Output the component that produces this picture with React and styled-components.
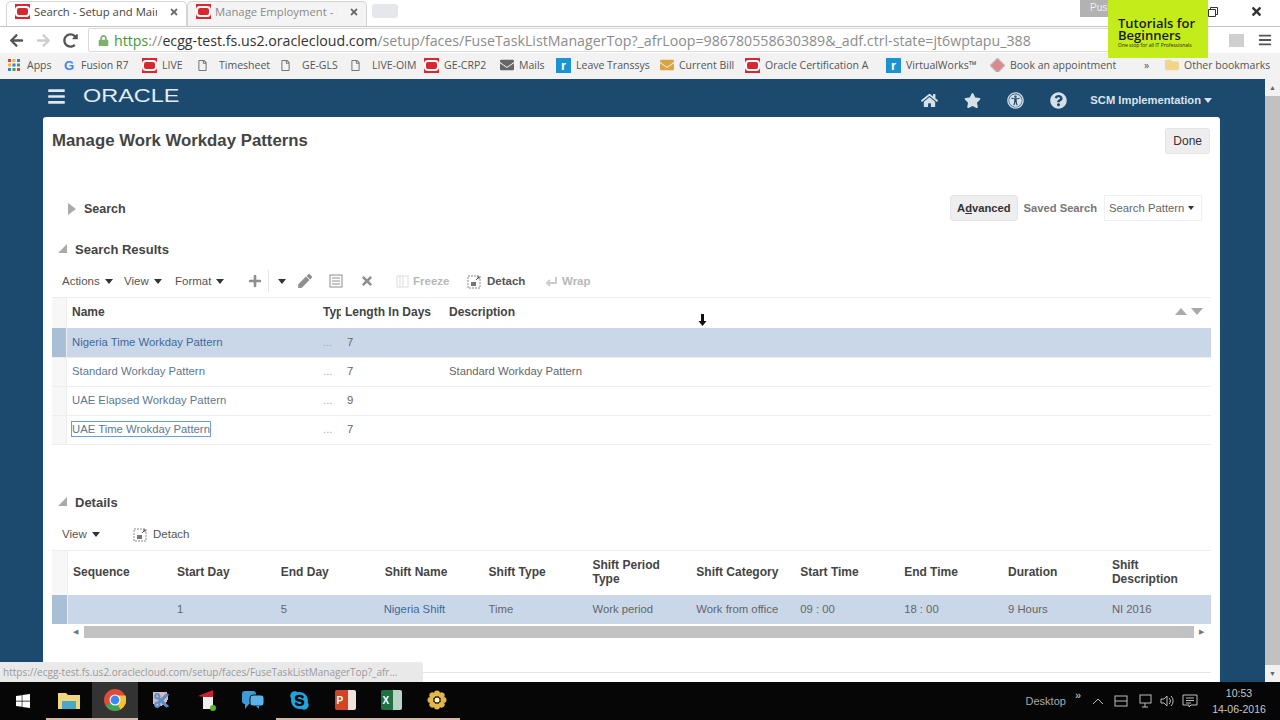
import React from "react";
import styled, { createGlobalStyle } from "styled-components";
import { FaHome, FaStar, FaUniversalAccess, FaQuestionCircle, FaPlus, FaPen, FaTimes, FaWindows, FaSkype, FaRegFile, FaLock, FaArrowLeft, FaArrowRight, FaRedoAlt, FaBars, FaFolder, FaEnvelope, FaCut } from "react-icons/fa";

const GlobalStyle = createGlobalStyle`
  html, body { margin: 0; padding: 0; height: 100%; overflow: hidden; background: #fff; }
  body { font-family: "Liberation Sans", Arial, sans-serif; color: #333; }
  * { box-sizing: border-box; }
`;

const Frame = styled.div`
  position: relative;
  width: 1280px;
  height: 720px;
  display: flex;
  flex-direction: column;
  overflow: hidden;
`;

/* browser chrome */
const TabStrip = styled.div`
  height: 27px;
  display: flex;
  align-items: flex-end;
  padding-left: 6px;
  background: #fff;
  border-bottom: 1px solid #c4c4c4;
  flex: none;
`;
const Tab = styled.div`
  width: ${(p) => p.$w}px;
  height: 25px;
  display: flex;
  align-items: center;
  gap: 4px;
  padding: 0 7px 5px 8px;
  font-family: "Open Sans", sans-serif;
  font-size: 11.3px;
  white-space: nowrap;
  color: ${(p) => (p.$active ? "#444" : "#8a8a8a")};
  background: ${(p) => (p.$active ? "#fff" : "#f4f4f4")};
  border: 1px solid #d4d4d4;
  border-bottom: none;
  border-radius: 5px 5px 0 0;
`;
const TabTitle = styled.span`
  flex: 1;
  overflow: hidden;
`;
const TabClose = styled(FaTimes)`
  font-size: 10px;
  color: #666;
  margin-left: 8px;
  flex: none;
`;
const NewTab = styled.div`
  width: 26px;
  height: 14px;
  margin: 0 0 8px 5px;
  background: #e6e7ea;
  border-radius: 3px;
`;
const WindowControls = styled.div`
  margin-left: auto;
  height: 26px;
  display: flex;
  align-self: flex-start;
`;
const PushButton = styled.div`
  width: 40px;
  height: 17px;
  padding: 2px 0 0 10px;
  background: #b2b2b2;
  color: #eee;
  font-size: 10px;
  margin-right: 88px;
`;
const RestoreIcon = styled.svg`
  width: 10px;
  height: 10px;
  margin: 7px 32px 0 0;
`;
const CloseIcon = styled(FaTimes)`
  font-size: 13px;
  color: #333;
  margin: 5px 17px 0 0;
`;

const AddressRow = styled.div`
  height: 26px;
  flex: none;
  display: flex;
  align-items: center;
  background: #fff;
  padding-left: 9px;
`;
const NavIcon = styled.span`
  width: 27px;
  display: flex;
  font-size: 15px;
  color: ${(p) => (p.$off ? "#cdcdcd" : "#555")};
`;
const Omnibox = styled.div`
  width: 1117px;
  height: 24px;
  margin-left: -2px;
  display: flex;
  align-items: center;
  gap: 5px;
  padding-left: 9px;
  border: 1px solid #dadada;
  border-radius: 2px;
  font-family: "Open Sans", sans-serif;
  font-size: 14.2px;
  white-space: nowrap;
  overflow: hidden;
`;
const Green = styled.span`
  color: #3f9a3c;
`;
const UrlHost = styled.span`
  color: #333;
`;
const UrlRest = styled.span`
  color: #8c8c8c;
`;
const LockIcon = styled(FaLock)`
  font-size: 11px;
  color: #7fb069;
  flex: none;
`;
const ToolIcons = styled.div`
  display: flex;
  align-items: center;
  gap: 14px;
  margin-left: 24px;
`;
const Cast = styled.div`
  width: 15px;
  height: 13px;
  background: #cfcfcf;
`;
const Menu3 = styled(FaBars)`
  font-size: 14px;
  color: #555;
`;

const Bookmarks = styled.div`
  height: 26px;
  flex: none;
  display: flex;
  align-items: center;
  padding: 0 0 2px 7px;
  background: #f2f2f2;
  font-family: "Open Sans", sans-serif;
  font-size: 10.5px;
  color: #555;
  white-space: nowrap;
`;
const Bookmark = styled.div`
  display: flex;
  align-items: center;
  gap: 5px;
  width: ${(p) => p.$w}px;
  padding-left: ${(p) => p.$pl ?? 0}px;
  flex: none;
  overflow: hidden;
`;
const BookmarkText = styled.span`
  width: ${(p) => p.$w}px;
  overflow: hidden;
`;
const PageIcon = styled(FaRegFile)`
  font-size: 11px;
  color: #777;
  margin-right: 6px;
  flex: none;
`;
const FolderIcon = styled(FaFolder)`
  font-size: 14px;
  color: #f1d58a;
  flex: none;
`;
const MailIcon = styled(FaEnvelope)`
  font-size: 14px;
  color: ${(p) => p.$c};
  flex: none;
`;
const OracleMark = styled.span`
  width: 15px;
  height: 15px;
  flex: none;
  display: flex;
  align-items: center;
  justify-content: center;
  background: #d8282f;
  &::after {
    content: "";
    width: 11px;
    height: 7px;
    border: 2px solid #fff;
    border-radius: 4px;
  }
`;
const SquareMark = styled.span`
  width: 15px;
  height: 15px;
  flex: none;
  background: ${(p) => p.$c};
  color: #fff;
  font-family: "Liberation Sans", sans-serif;
  font-weight: bold;
  font-size: 13px;
  line-height: 15px;
  text-align: center;
`;
const GoogleG = styled.span`
  width: 12px;
  flex: none;
  font-family: "Liberation Sans", sans-serif;
  font-weight: bold;
  font-size: 13px;
  color: #4285f4;
`;
const Diamond = styled.span`
  width: 11px;
  height: 11px;
  margin: 0 2px;
  flex: none;
  transform: rotate(45deg);
  background: #d98a90;
  border: 1px solid #b9b9b9;
`;
const AppsDots = styled.svg`
  width: 14px;
  height: 14px;
  margin-right: 1px;
  flex: none;
`;

/* application */
const AppArea = styled.div`
  flex: 1;
  min-height: 0;
  display: flex;
  background: #1b4a6e;
`;
const Main = styled.div`
  flex: 1;
  min-width: 0;
  display: flex;
  flex-direction: column;
  padding-left: 43px;
`;
const Scrollbar = styled.div`
  width: 15px;
  flex: none;
  background: #f1f1f1;
  display: flex;
  flex-direction: column;
  align-items: center;
  justify-content: space-between;
  padding: 5px 0;
  color: #666;
  font-size: 7px;
`;
const ScrollThumb = styled.div`
  width: 100%;
  flex: 1;
  margin: 5px 0;
  background: #c1c1c1;
`;
const AppHeader = styled.header`
  height: 38px;
  flex: none;
  display: flex;
  align-items: center;
  color: #fff;
  padding: 4px 53px 0 0;
`;
const Burger = styled(FaBars)`
  font-size: 19px;
  color: #dfe8ef;
  margin: -8px 0 0 4px;
`;
const Logo = styled.span`
  margin: -8px 0 0 17px;
  font-size: 17.5px;
  color: #e4ebf1;
  transform: scaleX(1.34);
  transform-origin: left center;
`;
const HeaderIcons = styled.div`
  margin-left: auto;
  display: flex;
  align-items: center;
  gap: 26px;
  font-size: 17px;
  color: #d4dfe8;
`;
const UserMenu = styled.span`
  margin-left: -3px;
  font-size: 11.2px;
  font-weight: bold;
  color: #d9e3ec;
`;
const Caret = styled.i`
  display: inline-block;
  width: 0;
  height: 0;
  margin-left: ${(p) => p.$ml ?? 5}px;
  vertical-align: 1px;
  border-left: ${(p) => p.$s ?? 4}px solid transparent;
  border-right: ${(p) => p.$s ?? 4}px solid transparent;
  border-top: ${(p) => (p.$s ?? 4) + 1}px solid ${(p) => p.$c ?? "#333"};
`;

const Card = styled.main`
  width: 1177px;
  flex: 1;
  min-height: 0;
  background: #fff;
  border-radius: 3px 3px 0 0;
  padding: 0 9px;
  display: flex;
  flex-direction: column;
`;
const TitleRow = styled.div`
  height: 47px;
  flex: none;
  padding-right: 1px;
  display: flex;
  align-items: center;
  justify-content: space-between;
`;
const Title = styled.h1`
  margin: 0;
  font-size: 16.8px;
  font-weight: bold;
  color: #444;
`;
const Button = styled.div`
  height: 26px;
  padding: 0 ${(p) => p.$px ?? 7}px;
  display: flex;
  align-items: center;
  font-size: ${(p) => p.$fs ?? 12}px;
  font-weight: ${(p) => (p.$bold ? "bold" : "normal")};
  color: #333;
  background: #eeeeee;
  border: 1px solid #e4e4e4;
  border-radius: 3px;
`;
const SearchRow = styled.div`
  height: 27px;
  margin-top: 31px;
  flex: none;
  display: flex;
  align-items: center;
  padding-left: 16px;
`;
const ArrowRight = styled.i`
  width: 0;
  height: 0;
  margin-right: 8px;
  border-top: 6px solid transparent;
  border-bottom: 6px solid transparent;
  border-left: 8px solid #aaa;
`;
const SearchLabel = styled.span`
  font-size: 12.5px;
  font-weight: bold;
  color: #444;
`;
const SearchActions = styled.div`
  margin-left: auto;
  display: flex;
  align-items: center;
  padding: 0 9px 2px 0;
`;
const SavedSearch = styled.span`
  margin: 0 7px 0 6px;
  font-size: 11.2px;
  font-weight: bold;
  color: #777;
`;
const PatternSelect = styled.div`
  width: 98px;
  height: 26px;
  display: flex;
  align-items: center;
  padding-left: 4px;
  font-size: 11.3px;
  color: #666;
  border: 1px solid #f0f0f0;
`;
const SectionHead = styled.div`
  height: 24px;
  margin-top: ${(p) => p.$mt}px;
  flex: none;
  display: flex;
  align-items: center;
  gap: 8px;
  font-size: 13px;
  font-weight: bold;
  color: #444;
`;
const Collapse = styled.i`
  width: 0;
  height: 0;
  margin: -2px 0 0 6px;
  border-bottom: 9px solid #aaa;
  border-left: 9px solid transparent;
`;
const Toolbar = styled.div`
  height: 30px;
  margin-top: 5px;
  flex: none;
  display: flex;
  align-items: center;
  padding-left: 10px;
  font-size: 11.5px;
  color: #555;
`;
const ToolMenu = styled.span`
  width: ${(p) => p.$w}px;
  flex: none;
`;
const ToolIcon = styled.span`
  width: ${(p) => p.$w ?? 31}px;
  flex: none;
  display: flex;
  justify-content: center;
  font-size: 14px;
  color: ${(p) => p.$c ?? "#8e8e8e"};
`;
const ToolDivider = styled.span`
  width: 1px;
  height: 22px;
  margin-left: 3px;
  flex: none;
  background: #e6e6e6;
`;
const ToolText = styled.span`
  display: flex;
  align-items: center;
  gap: ${(p) => p.$gap ?? 5}px;
  width: ${(p) => p.$w}px;
  margin-left: ${(p) => p.$ml ?? 0}px;
  flex: none;
  font-size: 11.5px;
  font-weight: ${(p) => (p.$plain ? "normal" : "bold")};
  color: ${(p) => (p.$off ? "#b8b8b8" : "#555")};
`;
const DetachIcon = styled.svg`
  width: 15px;
  height: 15px;
  flex: none;
`;

const Table = styled.div`
  position: relative;
  margin-top: 1px;
  flex: none;
  border-top: 1px solid #eee;
  border-bottom: ${(p) => (p.$closed ? "1px solid #eee" : "none")};
`;
const Row = styled.div`
  display: grid;
  grid-template-columns: ${(p) => p.$cols};
  height: ${(p) => p.$h ?? 29}px;
  align-items: center;
  font-size: 11.3px;
  color: #666;
  border-top: ${(p) => (p.$line ? "1px solid #eee" : "none")};
  background: ${(p) => (p.$selected ? "#c9d7e8" : "#fff")};
  white-space: nowrap;
`;
const Gutter = styled.div`
  height: 100%;
  background: ${(p) => (p.$selected ? "#a9bfd6" : "#f7f7f7")};
  border-right: 1px solid #eee;
`;
const HeadCell = styled.div`
  margin-top: -2px;
  font-size: 12px;
  font-weight: bold;
  color: #444;
  white-space: pre-line;
  line-height: 14px;
  overflow: hidden;
  padding-left: ${(p) => p.$pl ?? 5}px;
`;
const Cell = styled.div`
  margin-top: -2px;
  padding-left: ${(p) => p.$pl ?? 5}px;
`;
const LinkCell = styled.span`
  color: ${(p) => p.$c ?? "#4f6f8f"};
  padding: 1px 0;
  outline: ${(p) => (p.$focus ? "1px solid #6d9ed8" : "none")};
`;
const Dots = styled.span`
  color: #aaa;
`;
const SortArrows = styled.div`
  position: absolute;
  top: 10px;
  right: 8px;
  display: flex;
  gap: 4px;
`;
const ArrowUp = styled.i`
  width: 0;
  height: 0;
  border-left: 6px solid transparent;
  border-right: 6px solid transparent;
  border-bottom: 7px solid #aaa;
`;
const ArrowDown = styled.i`
  width: 0;
  height: 0;
  border-left: 6px solid transparent;
  border-right: 6px solid transparent;
  border-top: 7px solid #aaa;
`;
const HScroll = styled.div`
  height: 12px;
  margin: 2px 7px 0 21px;
  display: flex;
  align-items: center;
  justify-content: space-between;
  color: #777;
  font-size: 7px;
`;
const HThumb = styled.div`
  width: 1110px;
  height: 12px;
  background: #c1c1c1;
`;
const Footer = styled.div`
  margin-top: 34px;
  height: 10px;
  border-top: 1px solid #e4e4e4;
  flex: none;
`;

/* overlays */
const StatusTip = styled.div`
  position: absolute;
  left: 0;
  top: 662px;
  width: 423px;
  height: 20px;
  padding: 3px 0 0 3px;
  background: #e9e9e9;
  border-radius: 0 3px 0 0;
  font-family: "Open Sans", sans-serif;
  font-size: 10px;
  color: #999;
  white-space: nowrap;
`;
const Promo = styled.div`
  position: absolute;
  top: 0;
  left: 1108px;
  width: 100px;
  height: 58px;
  padding: 18px 0 0 10px;
  background: #c4ec1b;
  color: #1a1a1a;
  font-family: "Open Sans", sans-serif;
`;
const PromoTitle = styled.div`
  font-size: 13px;
  font-weight: 600;
  line-height: 11.5px;
`;
const PromoSub = styled.div`
  font-size: 5px;
  line-height: 9px;
  white-space: nowrap;
`;
const Pointer = styled.svg`
  position: absolute;
  left: 698px;
  top: 313px;
  width: 9px;
  height: 14px;
`;

/* taskbar */
const Taskbar = styled.footer`
  height: 38px;
  flex: none;
  display: flex;
  align-items: center;
  background: #060606;
  color: #bbb;
`;
const StartIcon = styled(FaWindows)`
  width: 46px;
  font-size: 16px;
  color: #fff;
  flex: none;
`;
const TaskItem = styled.div`
  width: 46px;
  height: 38px;
  flex: none;
  display: flex;
  align-items: center;
  justify-content: center;
  background: ${(p) => (p.$active ? "#333" : "transparent")};
  border-bottom: 2px solid ${(p) => (p.$open ? "#d3b7a7" : "transparent")};
`;
const Tile = styled.span`
  width: 21px;
  height: 20px;
  display: flex;
  align-items: center;
  padding-left: 2px;
  background: ${(p) => p.$bg};
  border-radius: 2px;
  color: #fff;
  font-size: 10px;
  font-weight: bold;
`;
const SnipIcon = styled(FaCut)`
  font-size: 17px;
  color: #5b8fc4;
  background: radial-gradient(circle at 35% 30%, #d9b8c4 55%, transparent 56%);
`;
const Tray = styled.div`
  margin-left: auto;
  display: flex;
  align-items: center;
  font-size: 11px;
  color: #a8a8a8;
`;
const TrayMore = styled.span`
  margin: -12px 2px 0 9px;
  font-size: 11px;
  font-weight: bold;
`;
const TrayIcon = styled.svg`
  width: 16px;
  height: 16px;
  margin-left: 7px;
`;
const Clock = styled.div`
  width: 60px;
  margin: 0 11px;
  text-align: center;
  font-size: 10.5px;
  line-height: 16px;
  color: #c8c8c8;
`;

const detailCols = "16px repeat(11, 103.9px)";
const resultCols = "15px 255px 19px 103px 1fr";

const results = [
  { name: "Nigeria Time Workday Pattern", days: 7, selected: true },
  { name: "Standard Workday Pattern", days: 7, desc: "Standard Workday Pattern" },
  { name: "UAE Elapsed Workday Pattern", days: 9 },
  { name: "UAE Time Wrokday Pattern", days: 7, focus: true },
];
const detailHeads = ["Sequence", "Start Day", "End Day", "Shift Name", "Shift Type", "Shift Period\nType", "Shift Category", "Start Time", "End Time", "Duration", "Shift\nDescription"];

const Detach = () => (
  <DetachIcon viewBox="0 0 15 15" fill="none">
    <rect x="1" y="2" width="12" height="12" stroke="#888" strokeDasharray="2 1" />
    <rect x="4" y="8" width="5" height="4" fill="#777" />
    <path d="M9 6l3-3M10 3h2v2" stroke="#555" />
  </DetachIcon>
);

export default function App() {
  return (
    <Frame>
      <GlobalStyle />
      <TabStrip>
        <Tab $w={181} $active>
          <OracleMark />
          <TabTitle>Search - Setup and Maint</TabTitle>
          <TabClose />
        </Tab>
        <Tab $w={180}>
          <OracleMark />
          <TabTitle>Manage Employment - Pe</TabTitle>
          <TabClose />
        </Tab>
        <NewTab />
        <WindowControls>
          <PushButton>Push</PushButton>
          <RestoreIcon viewBox="0 0 10 10" fill="none" stroke="#333">
            <path d="M2.5 2.5V.5h7v7h-2M.5 2.5h7v7h-7z" />
          </RestoreIcon>
          <CloseIcon />
        </WindowControls>
      </TabStrip>
      <AddressRow>
        <NavIcon><FaArrowLeft /></NavIcon>
        <NavIcon $off><FaArrowRight /></NavIcon>
        <NavIcon><FaRedoAlt /></NavIcon>
        <Omnibox>
          <LockIcon />
          <span>
            <Green>https</Green><UrlRest>://</UrlRest><UrlHost>ecgg-test.fs.us2.oraclecloud.com</UrlHost>
            <UrlRest>/setup/faces/FuseTaskListManagerTop?_afrLoop=986780558630389&amp;_adf.ctrl-state=jt6wptapu_388</UrlRest>
          </span>
        </Omnibox>
        <ToolIcons>
          <Cast />
          <Menu3 />
        </ToolIcons>
      </AddressRow>
      <Bookmarks>
        <Bookmark $w={57}>
          <AppsDots viewBox="0 0 14 14">
            {[0, 1, 2].flatMap((y) =>
              [0, 1, 2].map((x) => (
                <rect key={`${x}${y}`} x={1 + x * 4.5} y={1 + y * 4.5} width="3" height="3" fill={["#d9453d", "#f2b632", "#3b7ddd", "#3aa757"][(x + y) % 4]} />
              ))
            )}
          </AppsDots>
          Apps
        </Bookmark>
        <Bookmark $w={78}><GoogleG>G</GoogleG>Fusion R7</Bookmark>
        <Bookmark $w={55}><OracleMark />LIVE</Bookmark>
        <Bookmark $w={83}><PageIcon />Timesheet</Bookmark>
        <Bookmark $w={70}><PageIcon />GE-GLS</Bookmark>
        <Bookmark $w={74}><PageIcon />LIVE-OIM</Bookmark>
        <Bookmark $w={76}><OracleMark />GE-CRP2</Bookmark>
        <Bookmark $w={56}><MailIcon $c="#666" />Mails</Bookmark>
        <Bookmark $w={104}><SquareMark $c="#1c93d1">r</SquareMark>Leave Transsys</Bookmark>
        <Bookmark $w={85}><MailIcon $c="#d9a441" />Current Bill</Bookmark>
        <Bookmark $w={141}><OracleMark />Oracle Certification A</Bookmark>
        <Bookmark $w={104}><SquareMark $c="#1c93d1">r</SquareMark>VirtualWorks™</Bookmark>
        <Bookmark $w={150}><Diamond /><BookmarkText $w={108}>Book an appointment</BookmarkText></Bookmark>
        <Bookmark $w={25} $pl={4}>»</Bookmark>
        <Bookmark $w={110}><FolderIcon />Other bookmarks</Bookmark>
      </Bookmarks>
      <AppArea>
        <Main>
          <AppHeader>
            <Burger />
            <Logo>ORACLE</Logo>
            <HeaderIcons>
              <FaHome />
              <FaStar />
              <FaUniversalAccess />
              <FaQuestionCircle />
              <UserMenu>SCM Implementation<Caret $c="#d9e3ec" $s={4} $ml={3} /></UserMenu>
            </HeaderIcons>
          </AppHeader>
          <Card>
            <TitleRow>
              <Title>Manage Work Workday Patterns</Title>
              <Button>Done</Button>
            </TitleRow>
            <SearchRow>
              <ArrowRight />
              <SearchLabel>Search</SearchLabel>
              <SearchActions>
                <Button $bold $fs={11.2} $px={6}><span>A<u>d</u>vanced</span></Button>
                <SavedSearch>Saved Search</SavedSearch>
                <PatternSelect>Search Pattern<Caret $s={3} $ml={4} /></PatternSelect>
              </SearchActions>
            </SearchRow>
            <SectionHead $mt={15}><Collapse />Search Results</SectionHead>
            <Toolbar>
              <ToolMenu $w={62}>Actions<Caret /></ToolMenu>
              <ToolMenu $w={51}>View<Caret /></ToolMenu>
              <ToolMenu $w={70}>Format<Caret /></ToolMenu>
              <ToolIcon $w={20}><FaPlus /></ToolIcon>
              <ToolDivider />
              <ToolIcon $w={26}><Caret $ml={0} /></ToolIcon>
              <ToolIcon $w={20}><FaPen /></ToolIcon>
              <ToolIcon $w={42}><svg width="14" height="14" viewBox="0 0 14 14" fill="none" stroke="#8e8e8e"><rect x="1" y="1" width="12" height="12" /><path d="M3 4h8M3 7h8M3 10h8" /></svg></ToolIcon>
              <ToolIcon $w={20}><FaTimes /></ToolIcon>
              <ToolText $w={72} $ml={18} $gap={3} $off>
                <DetachIcon viewBox="0 0 15 15" fill="none" stroke="#ddd"><rect x="2" y="2" width="11" height="11" /><path d="M5 2v11M8 2v11" /></DetachIcon>
                Freeze
              </ToolText>
              <ToolText $w={77}><Detach />Detach</ToolText>
              <ToolText $w={60} $gap={3} $off>
                <DetachIcon viewBox="0 0 15 15" fill="none" stroke="#ccc" strokeWidth="2"><path d="M12 3v6H4M6 6l-3 3 3 3" /></DetachIcon>
                Wrap
              </ToolText>
            </Toolbar>
            <Table $closed>
              <Row $cols={resultCols} $h={30}>
                <Gutter />
                <HeadCell>Name</HeadCell>
                <HeadCell $pl={1}>Type</HeadCell>
                <HeadCell $pl={4}>Length In Days</HeadCell>
                <HeadCell>Description</HeadCell>
              </Row>
              <SortArrows><ArrowUp /><ArrowDown /></SortArrows>
              {results.map((r) => (
                <Row key={r.name} $cols={resultCols} $selected={r.selected} $line={!r.selected}>
                  <Gutter $selected={r.selected} />
                  <Cell><LinkCell $c={r.selected ? "#3f6a9a" : "#5f7890"} $focus={r.focus}>{r.name}</LinkCell></Cell>
                  <Cell $pl={1}><Dots>...</Dots></Cell>
                  <Cell $pl={6}>{r.days}</Cell>
                  <Cell>{r.desc}</Cell>
                </Row>
              ))}
            </Table>
            <SectionHead $mt={45}><Collapse />Details</SectionHead>
            <Toolbar>
              <ToolMenu $w={71}>View<Caret /></ToolMenu>
              <ToolText $w={80} $plain><Detach />Detach</ToolText>
            </Toolbar>
            <Table>
              <Row $cols={detailCols} $h={44}>
                <Gutter />
                {detailHeads.map((h) => (
                  <HeadCell key={h}>{h}</HeadCell>
                ))}
              </Row>
              <Row $cols={detailCols} $selected>
                <Gutter $selected />
                <Cell />
                <Cell>1</Cell>
                <Cell>5</Cell>
                <Cell $pl={4}><LinkCell $c="#3f6a9a">Nigeria Shift</LinkCell></Cell>
                <Cell>Time</Cell>
                <Cell>Work period</Cell>
                <Cell>Work from office</Cell>
                <Cell>09 : 00</Cell>
                <Cell>18 : 00</Cell>
                <Cell>9 Hours</Cell>
                <Cell>NI 2016</Cell>
              </Row>
              <HScroll>
                <span>◀</span>
                <HThumb />
                <span>▶</span>
              </HScroll>
            </Table>
            <Footer />
          </Card>
        </Main>
        <Scrollbar>
          <span>▲</span>
          <ScrollThumb />
          <span>▼</span>
        </Scrollbar>
      </AppArea>
      <Taskbar>
        <StartIcon />
        <TaskItem $open>
          <svg width="22" height="18" viewBox="0 0 22 18">
            <path d="M0 2h8l2 2h12v14H0z" fill="#f0d77b" />
            <rect x="4" y="10" width="14" height="8" fill="#4aa8c8" />
          </svg>
        </TaskItem>
        <TaskItem $active $open>
          <svg width="22" height="22" viewBox="0 0 20 20">
            <circle cx="10" cy="10" r="10" fill="#dd4b39" />
            <path d="M10 10L1.5 15A10 10 0 0 0 15 18.6z" fill="#3aa757" />
            <path d="M10 10L15 18.6A10 10 0 0 0 19.5 6H10z" fill="#f2c230" />
            <circle cx="10" cy="10" r="4.5" fill="#4285f4" stroke="#fff" />
          </svg>
        </TaskItem>
        <TaskItem><SnipIcon /></TaskItem>
        <TaskItem>
          <svg width="20" height="22" viewBox="0 0 20 22">
            <rect x="6" y="5" width="10" height="15" fill="#eee" />
            <path d="M1 7L16 1v7H7z" fill="#c8242f" />
            <circle cx="16" cy="19" r="3" fill="#5cb531" />
          </svg>
        </TaskItem>
        <TaskItem>
          <svg width="22" height="20" viewBox="0 0 22 20">
            <rect x="0" y="1" width="14" height="13" rx="3" fill="#3f9bd8" />
            <rect x="8" y="5" width="14" height="11" rx="3" fill="#59b4ea" stroke="#111" />
            <path d="M3 14v5l4-5zM17 16v3l-3-3z" fill="#3f9bd8" />
          </svg>
        </TaskItem>
        <TaskItem $open><FaSkype color="#1ea5e0" size={21} /></TaskItem>
        <TaskItem $open>
          <Tile $bg="linear-gradient(90deg, #cf4526 60%, #f1e3dc 60%)">P</Tile>
        </TaskItem>
        <TaskItem $open>
          <Tile $bg="linear-gradient(90deg, #1e7145 55%, #b9d4c4 55%)">X</Tile>
        </TaskItem>
        <TaskItem $open>
          <svg width="20" height="20" viewBox="0 0 20 20" fill="#e4b548">
            {[0, 45, 90, 135, 180, 225, 270, 315].map((a) => (
              <circle key={a} cx="10" cy="3.5" r="3" transform={`rotate(${a} 10 10)`} />
            ))}
            <circle cx="10" cy="10" r="2.5" fill="#fff3c4" />
          </svg>
        </TaskItem>
        <Tray>
          Desktop
          <TrayMore>»</TrayMore>
          <TrayIcon viewBox="0 0 16 16" fill="none" stroke="#bbb"><path d="M3 11l5-5 5 5" /></TrayIcon>
          <TrayIcon viewBox="0 0 16 16" fill="none" stroke="#bbb"><rect x="2" y="3" width="12" height="10" /><path d="M2 8h12" /></TrayIcon>
          <TrayIcon viewBox="0 0 16 16" fill="none" stroke="#bbb"><rect x="4" y="2" width="11" height="8" /><path d="M9 10v4M6 14h6" /></TrayIcon>
          <TrayIcon viewBox="0 0 16 16" fill="none" stroke="#bbb"><path d="M2 6v4h3l3 3V3L5 6zM10 5a4 4 0 0 1 0 6M12 3a7 7 0 0 1 0 10" /></TrayIcon>
          <TrayIcon viewBox="0 0 16 16" fill="none" stroke="#bbb"><path d="M1 2h14v10H9l-2 2v-2H1zM4 5h8M4 7.5h8M4 10h5" /></TrayIcon>
          <Clock>10:53<br />14-06-2016</Clock>
        </Tray>
      </Taskbar>
      <StatusTip>https://ecgg-test.fs.us2.oraclecloud.com/setup/faces/FuseTaskListManagerTop?_afr...</StatusTip>
      <Promo>
        <PromoTitle>Tutorials for<br />Beginners</PromoTitle>
        <PromoSub>One stop for all IT Professionals</PromoSub>
      </Promo>
      <Pointer viewBox="0 0 9 14"><path d="M4.5 13L0.5 8H3V1h3v7h2.5z" fill="#111" /></Pointer>
    </Frame>
  );
}
